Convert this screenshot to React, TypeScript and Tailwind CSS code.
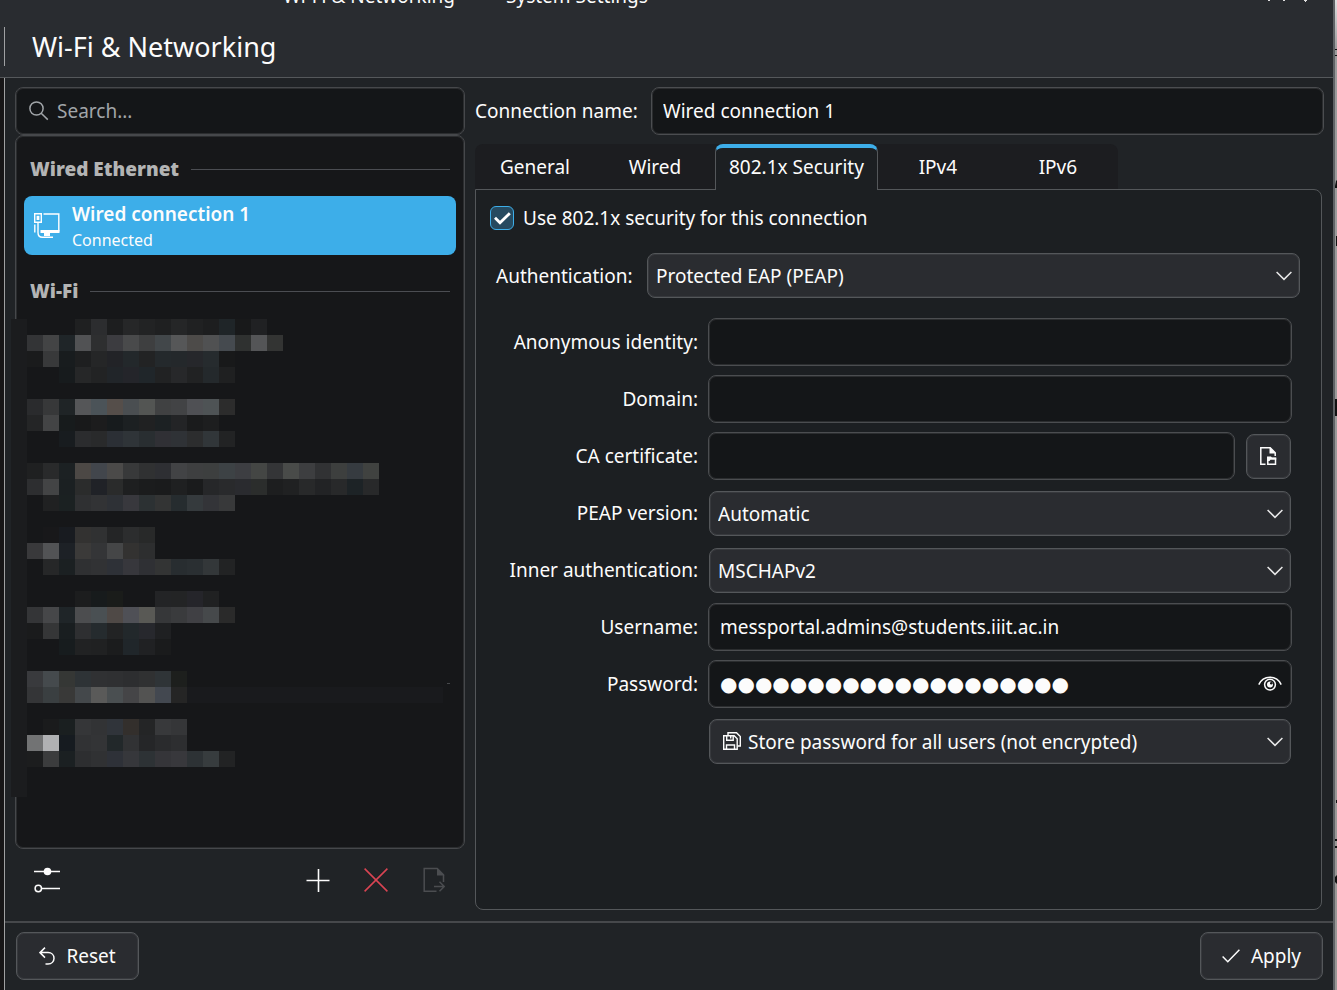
import { useState } from "react";
import type { ReactNode } from "react";

const CELL = 16;

// one entry per row of blocks: [row, first column, colours]
const mosaic: [number, number, string][] = [
  [0, 3, "1f2021 2c2d2f 1d1e1f 262728 222324 1f2021 252627 202122 1d1e1f 1f2528 18191a 202123"],
  [1, 0, "333436 434445 1f2528 515254 2e2f30 3c3c40 494a4b 3e3f40 42474a 565758 4d4b49 505152 454a4f 2f3130 545557 333433"],
  [2, 0, "1a1b1c 38393a 181c1e 1e1f20 252627 222327 23282b 222324 24292c 24282b 26272b 262b2e 18191a"],
  [3, 2, "171b1d 262728 222324 212529 24252a 20262a 212223 27282a 212223 24292c 1f2021"],
  [5, 0, "2a2b2d 373839 1f2426 555658 4b5358 554e4a 4a4e51 535553 404142 424345 4f5054 4e5355 2c2c2c"],
  [6, 0, "242526 434445 171b1c 18191a 1c1c1d 171b1d 1c2022 202122 1c2123 232426 1a1b1c 1d1e1f"],
  [7, 2, "181c1f 2b2c2e 292a2b 2b2f35 2f3438 292e31 303035 2f3236 2c2d2e 313639 222324"],
  [9, 0, "1f2021 292a2b 1c2123 4c4845 42464c 4b4a49 38393a 303132 2e2f33 424345 3e3f40 3d3f3f 3d4245 3d3e42 444644 343537 494b49 3d3e40 313234 3d3f3e 363b40 404240"],
  [10, 0, "2d2e30 434445 1b2022 2b2c2c 202227 2a2b2b 1e1f20 1b1c1d 1a1b1c 1f2021 1a1b1c 262729 292a2c 2a2b2f 2b2d2c 1d1e1f 202122 28292a 222325 28292a 1d2326 28292a"],
  [11, 1, "202122 1b2122 2f3032 323335 2e3136 38383d 2c3133 333434 262c2f 353a3d 333438 38393a"],
  [13, 1, "18181a 181b20 333231 303132 242526 2c2d2e 282929"],
  [14, 0, "39393b 525355 1d2126 3b3a39 343537 454647 333231 2d2e2f"],
  [15, 1, "262728 1b2022 2f3032 313234 2e3137 37373c 2f3034 333434 282d30 2a2f32 333739 222324"],
  [17, 3, "1c1d1e 171b1c 1a1c1a"],
  [17, 8, "232426 232425 25252a 202122"],
  [18, 0, "343537 464749 1f2528 4c4d4f 4a5053 4f4946 4f5056 595955 363739 3a3b3d 404044 46494b 2a2a2a"],
  [19, 0, "1a1b1c 353637 191e20 2e2f31 252b2e 222324 22282b 27282d 1f2022"],
  [20, 2, "171c1e 212223 202122 1b1c1d 20262a 202123 1a1b1c"],
  [22, 0, "393a3d 454a4d 353735 2e3336 303133 2f3032 2d2e30 303132 2f3437 1d1f1d"],
  [23, 0, "343537 3a3f41 393938 44484b 5a5a59 4a4f51 454547 535352 434850 252525"],
  [25, 1, "1a1b1c 1a1f20 353638 323335 30343a 332f2c 242526 38393b 353638"],
  [26, 0, "727374 b0b1b3 161b20 313234 333436 22282a 313234 252628 2a2b2d 2d2e30"],
  [27, 0, "1c1d1e 3b3c3d 1b2022 2d2e30 303133 2e3138 36373b 2d3235 353539 38383c 2d3235 373c3e 222324"],
];

const HiddenNetworks = () => (
  <svg width="440" height="478" className="-ml-[13px] mt-px block" shapeRendering="crispEdges" aria-hidden="true">
    <rect width="16" height="478" fill="#1b1c1e" />
    <rect x="176" y="368" width="256" height="16" fill="#191a1d" />
    <rect x="436" y="364" width="3" height="1" fill="#46484b" />
    {mosaic.map(([row, start, colors]) =>
      colors.split(" ").map((color, i) => (
        <rect
          key={`${row}-${start + i}`}
          x={16 + (start + i) * CELL}
          y={row * CELL}
          width={CELL}
          height={CELL}
          fill={`#${color}`}
        />
      ))
    )}
  </svg>
);

const Chevron = () => (
  <svg className="pointer-events-none absolute right-2 top-[18px]" width="16" height="10" viewBox="0 0 16 10" fill="none" stroke="#e8e8e8" strokeWidth="1.5">
    <path d="M.6 1 8 8.4 15.4 1" />
  </svg>
);

const fieldClass =
  "block h-12 w-full min-w-0 rounded-lg border border-[#4b4d50] bg-[#141618] px-[11px] text-[#fcfcfc] shadow-[inset_0_0_0_1px_#2b2d2f] outline-none focus:border-[#3daee9]";

const buttonClass =
  "flex items-center justify-center rounded-lg border border-[#54575a] bg-[#2a2c30] shadow-[inset_0_0_0_1px_#37393d]";

type SelectProps = {
  id: string;
  options: string[];
  icon?: ReactNode;
  label?: string;
};

const Select = ({ id, options, icon, label }: SelectProps) => (
  <div className="relative w-full">
    {icon}
    <select
      id={id}
      aria-label={label}
      className={`block h-[45px] w-full appearance-none rounded-lg border border-[#54575a] bg-[#2a2c30] pr-9 pt-px text-[#fcfcfc] shadow-[inset_0_0_0_1px_#37393d] outline-none focus:border-[#3daee9] ${icon ? "pl-[38px]" : "pl-2"}`}
    >
      {options.map((option) => (
        <option key={option}>{option}</option>
      ))}
    </select>
    <Chevron />
  </div>
);

const SectionHeader = ({ title }: { title: string }) => (
  <div className="flex h-[54px] items-center gap-3 px-[6px]">
    <h2 className="font-black text-[#b3b4b4]">{title}</h2>
    <div className="h-px flex-1 bg-[#4b4d52]" />
  </div>
);

const tabs = ["General", "Wired", "802.1x Security", "IPv4", "IPv6"];

const NetworkSettings = () => {
  const [activeTab, setActiveTab] = useState("802.1x Security");
  const [enabled, setEnabled] = useState(true);

  return (
    <div className="flex min-h-screen bg-[#292c30] font-['Noto_Sans',sans-serif] text-[19px] leading-7 text-[#fcfcfc]">
      <div className="flex min-w-0 flex-1 flex-col">
        {/* Title bar and page header */}
        <header className="relative h-[77px] overflow-hidden">
          <div className="absolute -top-[18px] left-[283px] flex gap-4">
            <span>Wi-Fi &amp; Networking</span>
            <span>—</span>
            <span>System Settings</span>
          </div>
          <svg className="absolute right-[22px] top-0" width="46" height="2" fill="#e0e0e0" aria-hidden="true">
            <path d="M3 0h2v1H3zM18 0h2v1h-2zM39 0h3v1h-1v1h-1V1h-1z" />
          </svg>
          <div className="absolute left-1 top-[27px] h-[39px] w-px bg-[#9fa1a3]" />
          <h1 className="pl-8 pt-[27px] text-[27px] leading-10">Wi-Fi &amp; Networking</h1>
        </header>

        <div className="flex flex-1 border-t border-[#55585b]">
          <div className="w-1 bg-[#171617]" />
          <div className="flex min-w-0 flex-1 flex-col border-l border-[#a0a1a2] bg-[#202326]">
            <main className="flex flex-1 gap-[10px] pb-[11px] pl-[10px] pr-[9px] pt-[9px]">
              {/* Connection list */}
              <aside className="flex w-[450px] shrink-0 flex-col">
                <div className="relative">
                  <svg className="absolute left-[14px] top-[14px]" width="20" height="20" viewBox="0 0 20 20" fill="none" stroke="#a1a5a9" strokeWidth="1.5">
                    <circle cx="7.5" cy="7.5" r="6.6" />
                    <path d="m12.2 12.2 6.6 6.4" />
                  </svg>
                  <input
                    type="search"
                    aria-label="Search"
                    placeholder="Search..."
                    className="block h-12 w-full rounded-lg border border-[#46484b] bg-[#141618] pl-[41px] shadow-[inset_0_0_0_1px_#2b2d2f] outline-none placeholder:text-[#a1a5a9]"
                  />
                </div>
                <div className="flex-1 rounded-lg border border-[#46484b] bg-[#161719] px-2 pt-[6px] shadow-[inset_0_0_0_1px_#2b2d2f]">
                  <SectionHeader title="Wired Ethernet" />
                  <button className="mb-[9px] flex h-[59px] w-full items-center gap-3 rounded-lg bg-[#3daee9] pl-[10px] pt-px text-left">
                    <svg width="26" height="26" viewBox="0 0 26 26" fill="none" stroke="#fff" strokeWidth="1.4">
                      <path d="M.7 .7h6.6v8.6H.7z" />
                      <path d="M3.3 3.5h1.4v2.8H3.3z" />
                      <path d="M9.5 1h15.3v17.5" />
                      <path d="M4 9.5v10q0 4.8 4.5 4.8H19M.8 11.5v8" />
                      <path d="M6.5 17H25.5v3H16v3h-6v-3H6.5z" fill="#fff" stroke="none" />
                    </svg>
                    <span>
                      <span className="block leading-7 font-semibold">Wired connection 1</span>
                      <span className="block text-base leading-6">Connected</span>
                    </span>
                  </button>
                  <SectionHeader title="Wi-Fi" />
                  <HiddenNetworks />
                </div>
                <div className="flex h-[61px] items-center px-[2px] pt-px">
                  <button aria-label="Configure" className="mr-auto flex w-[60px] justify-center">
                    <svg width="26" height="26" viewBox="0 0 26 26" fill="none" stroke="#fcfcfc" strokeWidth="1.5">
                      <path d="M0 4.5h26M8 21.5h18" />
                      <circle cx="13.5" cy="4.5" r="3.8" fill="#fcfcfc" stroke="none" />
                      <circle cx="4.3" cy="21.5" r="3.2" />
                    </svg>
                  </button>
                  <button aria-label="Add connection" className="flex w-[58px] justify-center">
                    <svg width="24" height="24" viewBox="0 0 24 24" fill="none" stroke="#fcfcfc" strokeWidth="1.6">
                      <path d="M12.5 1v23M.5 12.5h23" />
                    </svg>
                  </button>
                  <button aria-label="Remove connection" className="flex w-[58px] justify-center">
                    <svg width="24" height="24" viewBox="0 0 24 24" fill="none" stroke="#da4453" strokeWidth="1.5">
                      <path d="m.6.6 22.8 22.8M23.4.6.6 23.4" />
                    </svg>
                  </button>
                  <button aria-label="Export connection" className="flex w-[58px] justify-center">
                    <svg width="22" height="26" viewBox="0 0 22 26" fill="none" stroke="#4b4d50" strokeWidth="1.5">
                      <path d="M13.5 24.2H1.2V1.5h13l6.3 6.3V15" />
                      <path d="M14 1v7.5h7.5z" fill="#4b4d50" stroke="none" />
                      <path d="M11 19.5h10M16.5 14.8l4.7 4.7-4.7 4.7" />
                    </svg>
                  </button>
                </div>
              </aside>

              {/* Connection editor */}
              <section className="flex min-w-0 flex-1 flex-col">
                <div className="mb-[9px] flex items-center">
                  <label htmlFor="connection-name" className="w-[176px] shrink-0">Connection name:</label>
                  <input id="connection-name" defaultValue="Wired connection 1" className={fieldClass} />
                </div>

                <div className="flex">
                  <div role="tablist" className="flex h-[45px] rounded-t-lg bg-[#1c1d20]">
                    {tabs.map((tab) => (
                      <button
                        key={tab}
                        role="tab"
                        aria-selected={tab === activeTab}
                        onClick={() => setActiveTab(tab)}
                        className={
                          tab === activeTab
                            ? "relative h-[46px] min-w-[120px] rounded-t-lg border-x border-t-4 border-x-[#54575a] border-t-[#3daee9] bg-[#1c1f22] px-[13px] pb-1"
                            : "h-[45px] min-w-[120px] px-3"
                        }
                      >
                        {tab}
                      </button>
                    ))}
                  </div>
                </div>

                <form className="mr-[2px] flex-1 rounded-lg rounded-tl-none border border-[#54575a] bg-[#1c1f22] pt-4">
                  <label className="flex h-6 items-center gap-[9px] pl-[14px]">
                    <span className="relative flex h-6 w-6">
                      <input
                        type="checkbox"
                        checked={enabled}
                        onChange={(e) => setEnabled(e.target.checked)}
                        className="h-6 w-6 appearance-none rounded-md border border-[#3daee9] bg-[#264a60]"
                      />
                      {enabled && (
                        <svg className="pointer-events-none absolute left-1 top-[6px]" width="17" height="13" viewBox="0 0 17 13" fill="none" stroke="#fff" strokeWidth="2.8">
                          <path d="m1 5.8 5 5L15.8 1.2" />
                        </svg>
                      )}
                    </span>
                    Use 802.1x security for this connection
                  </label>

                  <div className="mt-[23px] flex items-center pl-5 pr-[21px]">
                    <label htmlFor="auth" className="w-[151px]">Authentication:</label>
                    <div className="flex-1">
                      <Select id="auth" options={["Protected EAP (PEAP)", "TLS", "Tunneled TLS (TTLS)"]} />
                    </div>
                  </div>

                  <div className="mt-5 grid auto-rows-[48px] grid-cols-[193px_1fr] items-center gap-x-[10px] gap-y-[9px] px-[29px]">
                    <label htmlFor="identity" className="text-right">Anonymous identity:</label>
                    <input id="identity" className={fieldClass} />

                    <label htmlFor="domain" className="text-right">Domain:</label>
                    <input id="domain" className={fieldClass} />

                    <label htmlFor="ca" className="text-right">CA certificate:</label>
                    <div className="flex items-center gap-[11px] pr-px">
                      <input id="ca" className={fieldClass} />
                      <button type="button" aria-label="Open file" className={`h-[45px] w-[45px] shrink-0 ${buttonClass}`}>
                        <svg width="17" height="18" viewBox="0 0 17 18" fill="none" stroke="#fcfcfc" strokeWidth="1.5">
                          <path d="M5.500 17.200H.8V.8h9.400l5 5V9" />
                          <path d="M9.500 0v6.500H16z" fill="#fcfcfc" stroke="none" />
                          <path d="M7.800 17.200v-6h7.700v6z" />
                          <path d="M7 9.500h4l1 1.300h4.200v2H10.500l-1 1.200H7z" fill="#fcfcfc" stroke="none" />
                        </svg>
                      </button>
                    </div>

                    <label htmlFor="peap" className="text-right">PEAP version:</label>
                    <div className="px-px">
                      <Select id="peap" options={["Automatic", "Version 0", "Version 1"]} />
                    </div>

                    <label htmlFor="inner" className="text-right">Inner authentication:</label>
                    <div className="px-px">
                      <Select id="inner" options={["MSCHAPv2", "MD5", "GTC"]} />
                    </div>

                    <label htmlFor="username" className="text-right">Username:</label>
                    <input id="username" defaultValue="messportal.admins@students.iiit.ac.in" className={fieldClass} />

                    <label htmlFor="password" className="text-right">Password:</label>
                    <div className="relative">
                      <input
                        id="password"
                        type="text"
                        autoComplete="off"
                        defaultValue={"●".repeat(20)}
                        className={`font-['DejaVu_Sans',sans-serif] text-xl ${fieldClass}`}
                      />
                      <button type="button" aria-label="Show password" className="absolute right-[10px] top-4">
                        <svg width="24" height="16" viewBox="0 0 24 16" fill="none" stroke="#fcfcfc" strokeWidth="1.5">
                          <path d="M.8 8.600C3 3.600 7 1.200 12 1.200s9 2.400 11.200 7.400" />
                          <circle cx="12" cy="8.600" r="5.400" />
                          <circle cx="12" cy="8.600" r="3" fill="#fcfcfc" stroke="none" />
                          <circle cx="13.300" cy="7.300" r="1.300" fill="#141618" stroke="none" />
                        </svg>
                      </button>
                    </div>

                    <span />
                    <div className="px-px">
                      <Select
                        id="store"
                        label="Password storage"
                        options={["Store password for all users (not encrypted)", "Ask for this password every time"]}
                        icon={
                          <svg className="pointer-events-none absolute left-[14px] top-[13px]" width="18" height="18" viewBox="0 0 18 18" fill="none" stroke="#fcfcfc" strokeWidth="1.4">
                            <path d="M.7 3.700h10.500l3 3v10.600H.7z" />
                            <path d="M3.700 3.700v4.500h6.500V3.700M7.700 4v2.500M3.500 17v-4h8v4" />
                            <path d="M5 3V.7h8.500l3.800 3.800V14H14.500" />
                          </svg>
                        }
                      />
                    </div>
                  </div>
                </form>
              </section>
            </main>

            <footer className="flex justify-between border-t-2 border-[#46484b] pb-[10px] pl-[11px] pr-[10px] pt-[9px]">
              <button className={`h-12 w-[123px] gap-[11px] ${buttonClass}`}>
                <svg width="16" height="18" viewBox="0 0 16 18" fill="none" stroke="#fcfcfc" strokeWidth="1.5">
                  <path d="M6 .6 1 5.600l5 5M1 5.600h8c3.700 0 6 2.600 6 5.700s-2.300 5.700-6 5.700H6.500" />
                </svg>
                Reset
              </button>
              <button className={`h-12 w-[123px] gap-[11px] ${buttonClass}`}>
                <svg width="18" height="14" viewBox="0 0 18 14" fill="none" stroke="#fcfcfc" strokeWidth="1.5">
                  <path d="m.6 7.500 5.200 5.200L17.400.8" />
                </svg>
                Apply
              </button>
            </footer>
          </div>
        </div>
      </div>

      {/* Window behind */}
      <div className="w-1 border-l-2 border-[#5f6265] bg-gradient-to-b from-[#e0e0e0] from-0% via-[#9c9c9c] via-5% to-[#9a9896]">
        <svg width="2" height="890" fill="#111" aria-hidden="true">
          <path d="M0 49h2v1H0zM0 55h2v1H0zM1 181l1-1v8H0v-2zM1 236h1v10H1zM0 399h2v17H0zM1 800h1v3H1zM0 839h2v2H0zM0 846h2v2H0zM0 877l2-2v9l-2-2z" />
        </svg>
      </div>
    </div>
  );
};

export default NetworkSettings;
